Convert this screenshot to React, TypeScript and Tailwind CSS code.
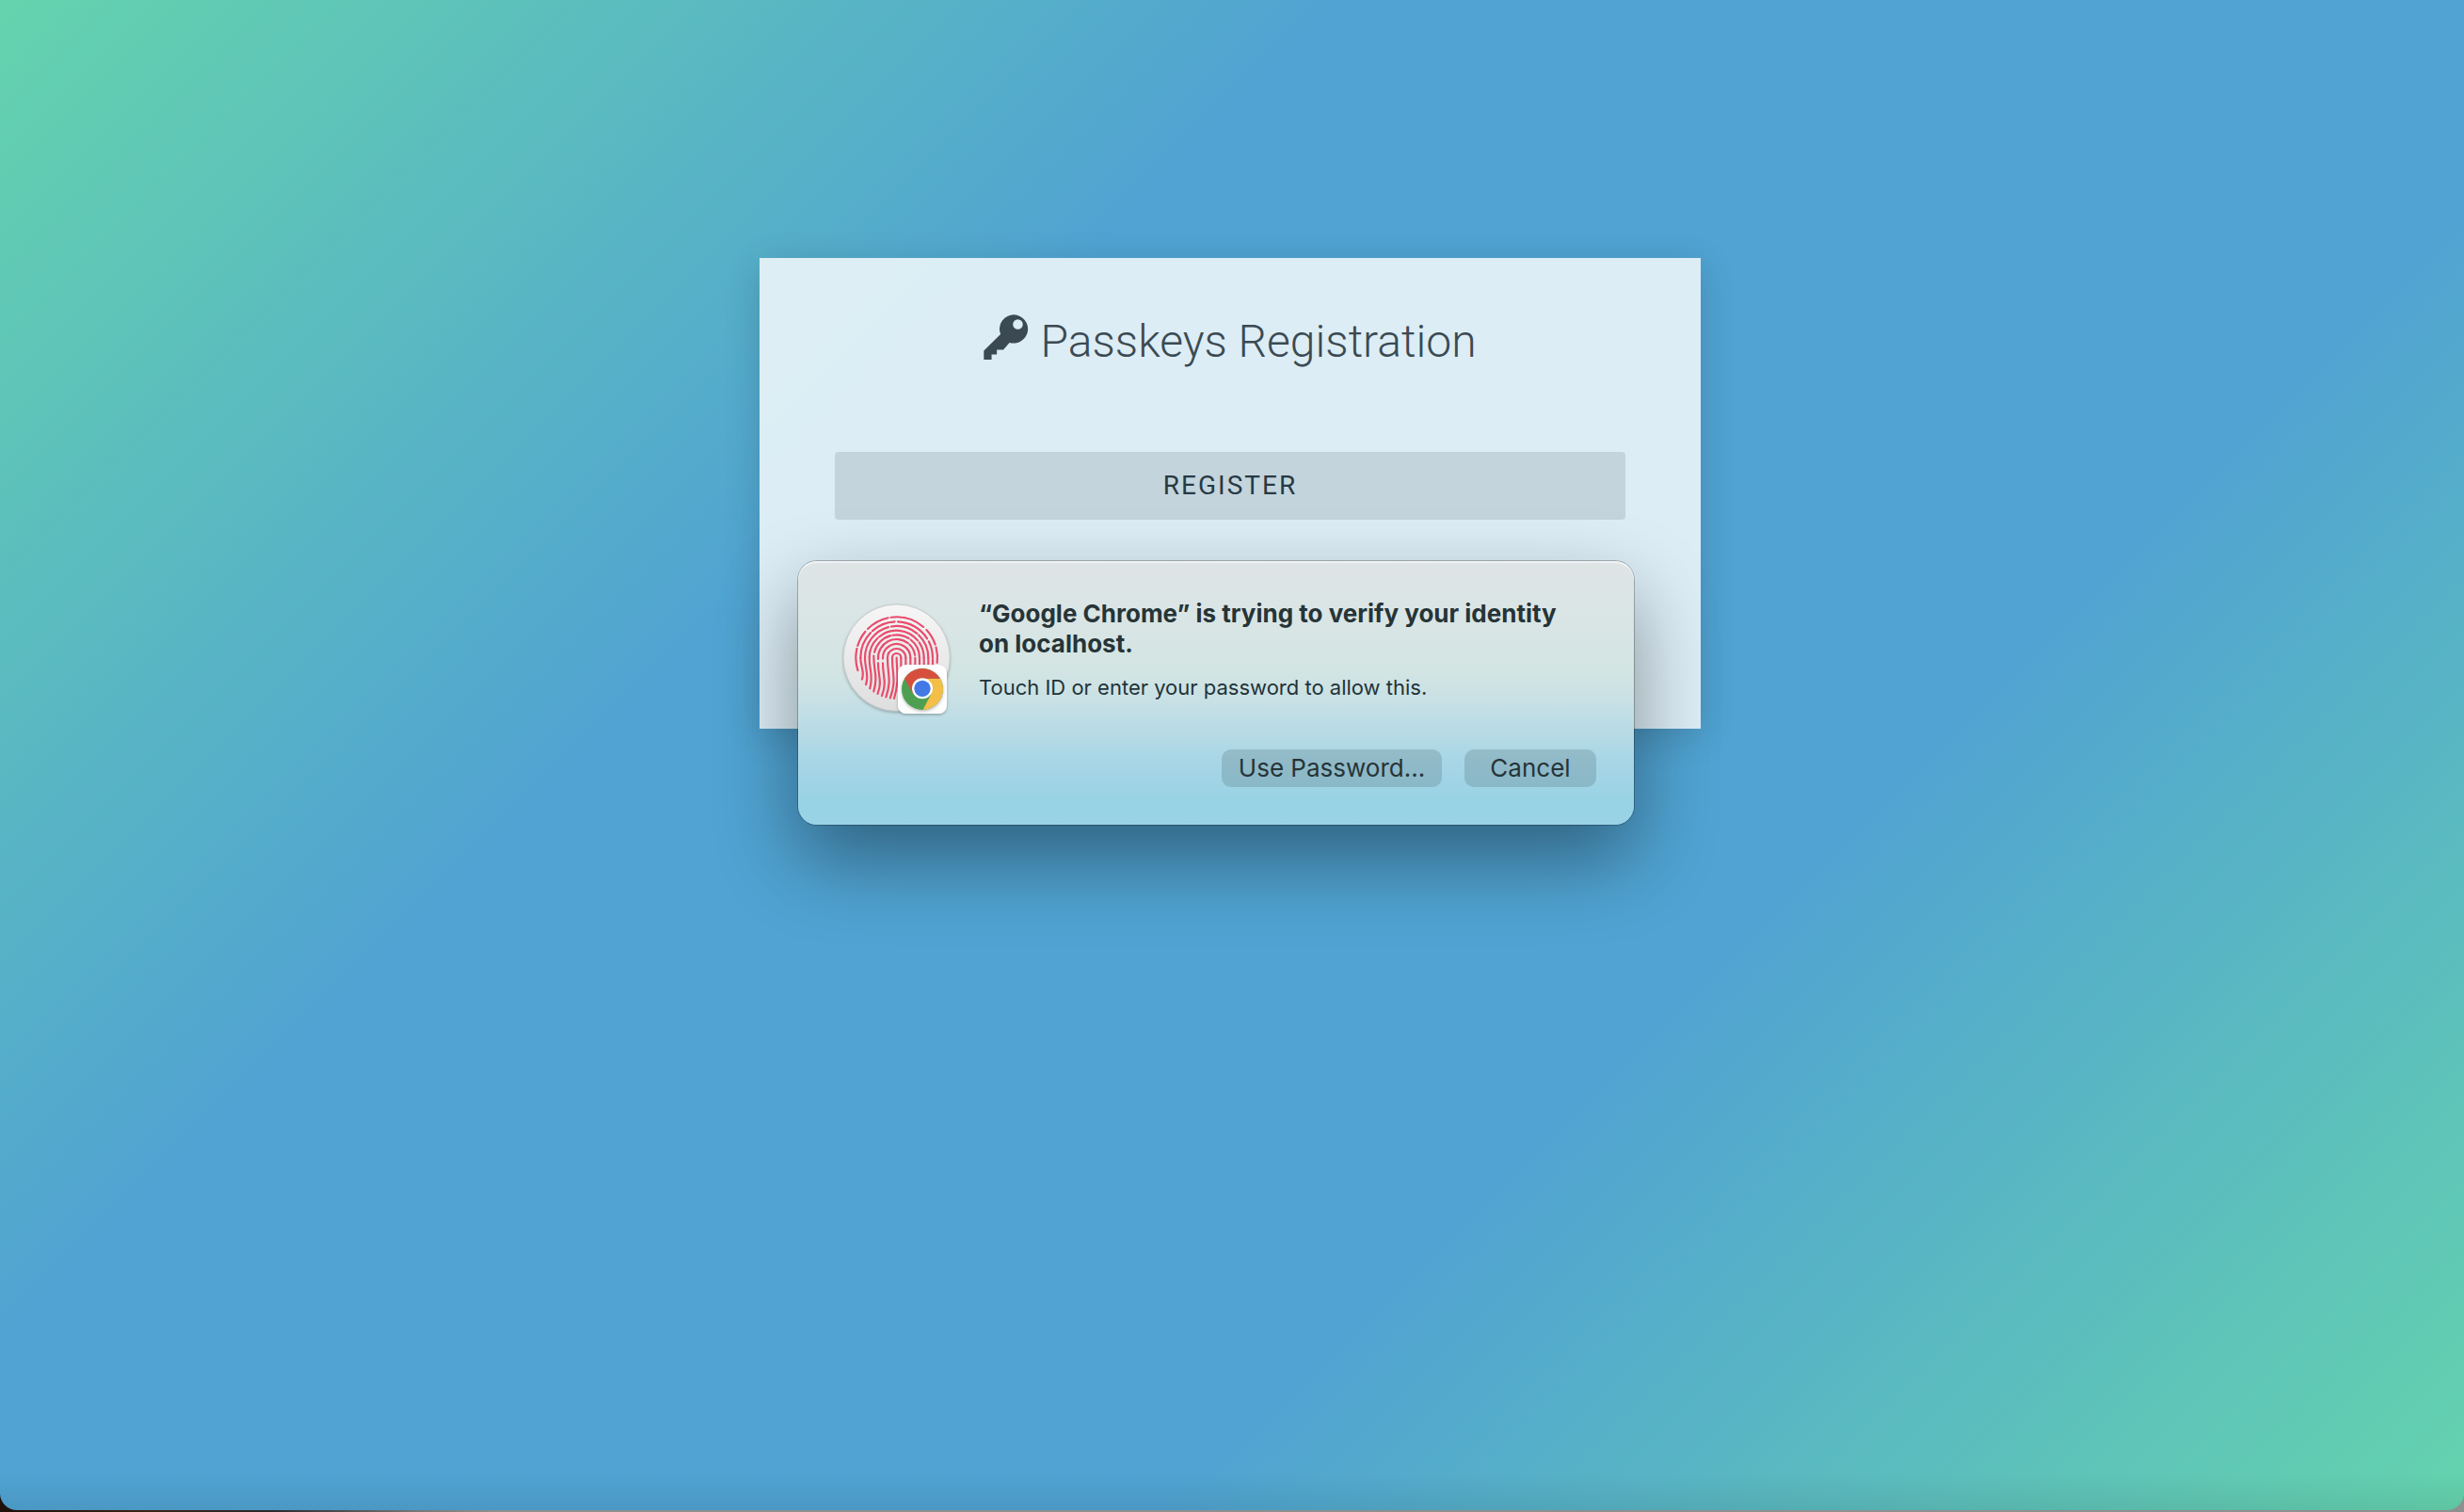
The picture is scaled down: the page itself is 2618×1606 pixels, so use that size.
const CX = 248;
const CY = 236;

type Ridge = { r: number; arcs: [number, number][]; left?: number; right?: number };

// Arc angles run clockwise in degrees: 0 is the left side, 90 the top, 180 the right.
const RIDGES: Ridge[] = [
  { r: 130, arcs: [[-18, 13], [17, 40], [45, 78], [82, 131], [137, 161], [165, 187]] },
  { r: 115, arcs: [[0, 44], [48, 87], [92, 148], [153, 180]], left: 0, right: 4 },
  { r: 101, arcs: [[0, 75], [80, 130], [134, 180]], left: 0, right: 0 },
  { r: 87, arcs: [[0, 46], [50, 141], [146, 180]], left: 0, right: 0 },
  { r: 73, arcs: [[14, 75], [80, 122], [128, 180]], left: -6, right: 0 },
  { r: 59, arcs: [[-4, 128], [134, 172]], left: 17, right: 0 },
  { r: 44, arcs: [[-4, 58], [64, 180]], left: 17, right: 0 },
  { r: 29, arcs: [[0, 68], [76, 180]], left: 0, right: 0 },
  { r: 14, arcs: [[0, 180]], left: 0, right: 0 },
];

function point(r: number, deg: number) {
  const a = ((deg + 180) * Math.PI) / 180;
  return `${(CX + r * Math.cos(a)).toFixed(1)} ${(CY + r * Math.sin(a)).toFixed(1)}`;
}

function arcPath(r: number, from: number, to: number) {
  return `M${point(r, from)}A${r} ${r} 0 0 1 ${point(r, to)}`;
}

// A ridge's left leg: straight down at first, then leaning left until it meets the print's edge.
function leftLeg(r: number, start: number) {
  const x = CX - r;
  const endX = x + (r - 73) * 0.11;
  const endY = CY + Math.sqrt(130 ** 2 - (endX - CX) ** 2);
  const mid = CY + start + (endY - CY - start) * 0.45;
  return `M${x} ${CY + start}C${x} ${mid} ${x + 14} ${mid + 12} ${endX.toFixed(1)} ${endY.toFixed(1)}`;
}

function TouchIdIcon() {
  return (
    <svg viewBox="72 60 360 372" className="h-[124px] w-[120px]" role="img" aria-label="Touch ID and Google Chrome">
      <defs>
        <linearGradient id="disc" x1="0" y1="0" x2="0" y2="1">
          <stop offset="0" stopColor="#f6f6f6" />
          <stop offset="1" stopColor="#dedede" />
        </linearGradient>
        <clipPath id="print">
          <circle cx={CX} cy={CY} r="135" />
        </clipPath>
        <clipPath id="wheel">
          <circle cx="330" cy="336" r="66" />
        </clipPath>
        <filter id="soft" x="-20%" y="-20%" width="140%" height="140%">
          <feDropShadow dx="0" dy="4" stdDeviation="4" floodColor="#000" floodOpacity="0.28" />
        </filter>
      </defs>
      <circle cx="248" cy="236" r="170" fill="url(#disc)" stroke="#b4b8b8" strokeWidth="2" filter="url(#soft)" />
      <g clipPath="url(#print)" fill="none" stroke="#e94b6c" strokeWidth="6.5" strokeLinecap="round">
        {RIDGES.map((ridge) => (
          <g key={ridge.r}>
            {ridge.arcs.map(([from, to]) => (
              <path key={from} d={arcPath(ridge.r, from, to)} />
            ))}
            {ridge.left !== undefined && <path d={leftLeg(ridge.r, ridge.left)} />}
            {ridge.right !== undefined && <path d={`M${CX + ridge.r} ${CY + ridge.right}q1 40 -6 150`} />}
          </g>
        ))}
        <path d="M248 236C249 290 256 310 240 366" />
      </g>
      <rect x="252" y="258" width="156" height="156" rx="26" fill="#fdfdfd" filter="url(#soft)" />
      <g filter="url(#soft)">
        <g clipPath="url(#wheel)">
          <rect x="264" y="270" width="132" height="132" fill="#4f9f53" />
          <path d="M330 302H400V420H322L358 352Z" fill="#f3bf48" />
          <path d="M330 302H400V260H260V290L273 302L301 352L330 336Z" fill="#d6503d" />
        </g>
      </g>
      <circle cx="330" cy="334" r="33" fill="#fff" />
      <circle cx="330" cy="334" r="26" fill="#4379e6" />
    </svg>
  );
}

function KeyIcon() {
  return (
    <svg viewBox="28 24 146 146" className="size-12 shrink-0" fill="currentColor" aria-hidden="true">
      <path
        fillRule="evenodd"
        d="M127 25a46 46 0 1 1-15 90L92 138H71v15H54v17H29v-29L83 88A46 46 0 0 1 127 25ZM139 40a16 16 0 1 0 0 32a16 16 0 0 0 0-32Z"
      />
    </svg>
  );
}

function IdentityDialog() {
  return (
    <section
      role="dialog"
      aria-labelledby="dialog-title"
      aria-describedby="dialog-text"
      className="absolute top-[322px] left-[41px] flex w-[888px] gap-[26px] rounded-[20px] bg-[linear-gradient(180deg,#dee4e5_0%,#dae5e5_20%,#d3e5e3_41%,#c9e1e5_52%,#a9d6e6_75%,#97d2e5_92%,#9ad3e5_100%)] px-10 pt-10 pb-10 font-['Inter',sans-serif] text-[#263437] shadow-[0_0_0_1px_rgba(0,0,0,0.25),inset_0_2px_1px_rgba(255,255,255,0.55),0_36px_84px_rgba(0,0,0,0.4)]"
    >
      <div className="ml-[6px] pt-1">
        <TouchIdIcon />
      </div>
      <div className="flex-1">
        <h2 id="dialog-title" className="text-[26px] leading-8 font-bold">
          “Google Chrome” is trying to verify your identity
          <br />
          on localhost.
        </h2>
        <p id="dialog-text" className="mt-4 text-[22px] leading-7 text-[#1f3338]">
          Touch ID or enter your password to allow this.
        </p>
        <div className="mt-[52px] flex justify-end gap-6 text-[26px] leading-10">
          <button type="button" className="h-10 w-[234px] rounded-[10px] bg-[#4a6670]/25">
            Use Password...
          </button>
          <button type="button" className="h-10 w-[140px] rounded-[10px] bg-[#4a6670]/25">
            Cancel
          </button>
        </div>
      </div>
    </section>
  );
}

export default function App() {
  return (
    <div className="flex min-h-screen flex-col bg-[linear-gradient(90deg,#1f100a_0%,#3a2416_6%,#2a2a2e_11%,#77787a_17%,#8f8f8f_20%,#8f8f8f_100%)] pb-[2px]">
      <div className="flex-1 overflow-hidden rounded-b-[18px] bg-[linear-gradient(0deg,rgba(0,0,0,0.07),rgba(0,0,0,0)_40px),linear-gradient(135deg,#65d3ad_0%,#50a3d2_34%,#50a3d2_67%,#65d3ad_100%)] pt-[274px] pr-1">
        <main className="relative mx-auto h-[500px] w-full max-w-[1000px] bg-white/80 px-20 pt-15 font-['Roboto',sans-serif] text-[#3b4a52] shadow-[0_8px_36px_rgba(0,0,0,0.16)]">
          <h1 className="flex items-start justify-center gap-3 text-5xl leading-[58px] font-light">
            <KeyIcon />
            Passkeys Registration
          </h1>
          <button
            type="button"
            className="mt-[88px] h-[72px] w-full rounded-[4px] bg-[#3b4a52]/15 text-[28px] tracking-[2px] text-[#263a44]"
          >
            REGISTER
          </button>
          <IdentityDialog />
        </main>
      </div>
    </div>
  );
}
